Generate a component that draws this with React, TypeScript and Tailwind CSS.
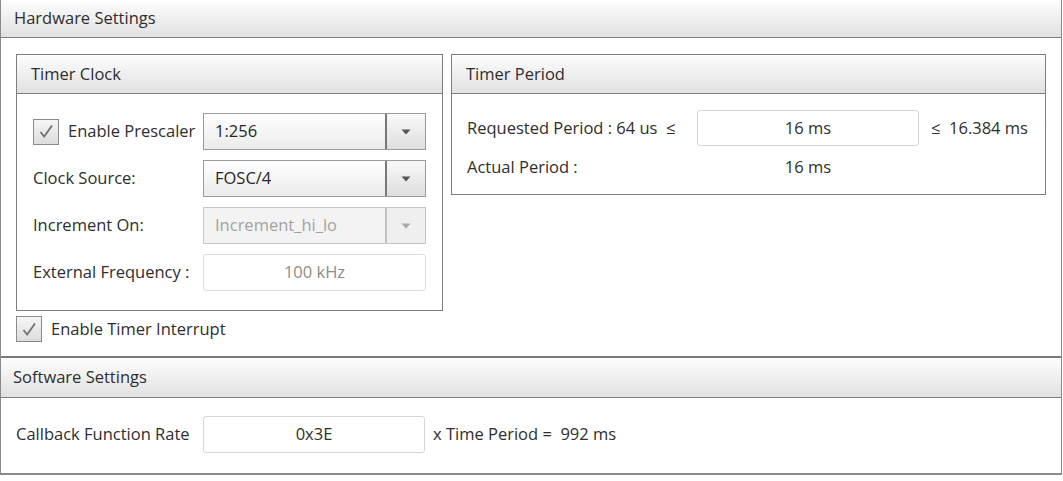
import React from 'react';

function CheckBox() {
  return (
    <span className="flex h-[26px] w-[26px] shrink-0 items-center justify-center border border-[#8a8a8a] bg-gradient-to-b from-[#f6f6f6] to-[#dcdcdc]">
      <svg width="16" height="15" viewBox="0 0 16 15">
        <path d="M2.5 8 L6.2 12.5 L14 1.5" fill="none" stroke="#707070" strokeWidth="1.8" />
      </svg>
    </span>
  );
}

function Arrow({ disabled }: { disabled?: boolean }) {
  return (
    <svg width="10" height="6" viewBox="0 0 10 6">
      <path d="M0.5 0.5 L9.5 0.5 L5 5.5 Z" fill={disabled ? '#a8a8a8' : '#555555'} />
    </svg>
  );
}

function Select({ value, disabled }: { value: string; disabled?: boolean }) {
  return (
    <div
      className={
        disabled
          ? 'flex h-[37px] w-[223px] border border-[#c6c6c6] bg-[#f3f3f3] text-[#a2a2a2]'
          : 'flex h-[37px] w-[223px] border border-[#9a9a9a] bg-gradient-to-b from-white to-[#ebebeb] text-[#262626]'
      }
    >
      <div className="flex flex-1 items-center pl-[11px]">{value}</div>
      <div
        className={
          disabled
            ? 'flex w-[40px] items-center justify-center border-l-2 border-[#c2c2c2] bg-[#efefef]'
            : 'flex w-[40px] items-center justify-center border-l-2 border-[#777777] bg-gradient-to-b from-[#f9f9f9] to-[#dedede]'
        }
      >
        <Arrow disabled={disabled} />
      </div>
    </div>
  );
}

function Header({ title, small, tall }: { title: string; small?: boolean; tall?: boolean }) {
  return (
    <div
      className={
        (small ? 'h-[39px] px-[14px] ' : tall ? 'h-[40px] px-[12px] ' : 'h-[38px] px-[13px] ') +
        'flex items-center border-b border-[#7e7e7e] bg-gradient-to-b from-[#fdfdfd] to-[#e1e1e1] text-[#2e2e2e]'
      }
    >
      {title}
    </div>
  );
}

export default function App() {
  return (
    <div className="h-[481px] w-[1063px] bg-white font-['Open_Sans',sans-serif] text-[16.5px] text-[#2e2e2e]">
      <div className="w-[1062px] border-x border-[#8a8a8a]">
        {/* Hardware */}
        <Header title="Hardware Settings" />
        <div className="px-[15px] pt-[16px] pb-[14px]">
          <div className="flex items-start gap-[8px]">
            <div className="w-[428px] border border-[#7e7e7e]">
              <Header title="Timer Clock" small />
              <div className="flex flex-col gap-[10px] pt-[19px] pr-[16px] pb-[19px] pl-[16px]">
                <div className="flex items-center">
                  <div className="flex w-[170px] items-center gap-[9px]">
                    <CheckBox />
                    <span>Enable Prescaler</span>
                  </div>
                  <Select value="1:256" />
                </div>
                <div className="flex items-center">
                  <div className="w-[170px]">Clock Source:</div>
                  <Select value="FOSC/4" />
                </div>
                <div className="flex items-center">
                  <div className="w-[170px]">Increment On:</div>
                  <Select value="Increment_hi_lo" disabled />
                </div>
                <div className="flex items-center">
                  <div className="w-[170px]">External Frequency :</div>
                  <div className="flex h-[37px] w-[223px] items-center justify-center rounded-[3px] border border-[#dcdcdc] text-[#8c8c8c]">
                    100 kHz
                  </div>
                </div>
              </div>
            </div>
            <div className="w-[598px] border border-[#7e7e7e]">
              <Header title="Timer Period" small />
              <div className="flex flex-col gap-[9px] pt-[16px] pb-[14px] pl-[15px]">
                <div className="flex items-center">
                  <div className="w-[230px]">Requested Period : 64 us&nbsp; ≤</div>
                  <div className="flex h-[36px] w-[222px] items-center justify-center rounded-[3px] border border-[#d6d6d6]">
                    16 ms
                  </div>
                  <div className="pl-[12px]">≤&nbsp; 16.384 ms</div>
                </div>
                <div className="flex items-center">
                  <div className="w-[230px]">Actual Period :</div>
                  <div className="w-[222px] text-center">16 ms</div>
                </div>
              </div>
            </div>
          </div>
          <div className="mt-[5px] flex items-center gap-[9px]">
            <CheckBox />
            <span>Enable Timer Interrupt</span>
          </div>
        </div>
        <div className="h-[2px] bg-[#7a7a7a]" />
        {/* Software */}
        <Header title="Software Settings" tall />
        <div className="flex h-[77px] items-center px-[15px] pb-[3px] border-b-2 border-[#8a8a8a]">
          <div className="w-[187px]">Callback Function Rate</div>
          <div className="flex h-[37px] w-[222px] items-center justify-center rounded-[3px] border border-[#d6d6d6]">
            0x3E
          </div>
          <div className="pl-[8px]">x Time Period =&nbsp; 992 ms</div>
        </div>
      </div>
    </div>
  );
}
